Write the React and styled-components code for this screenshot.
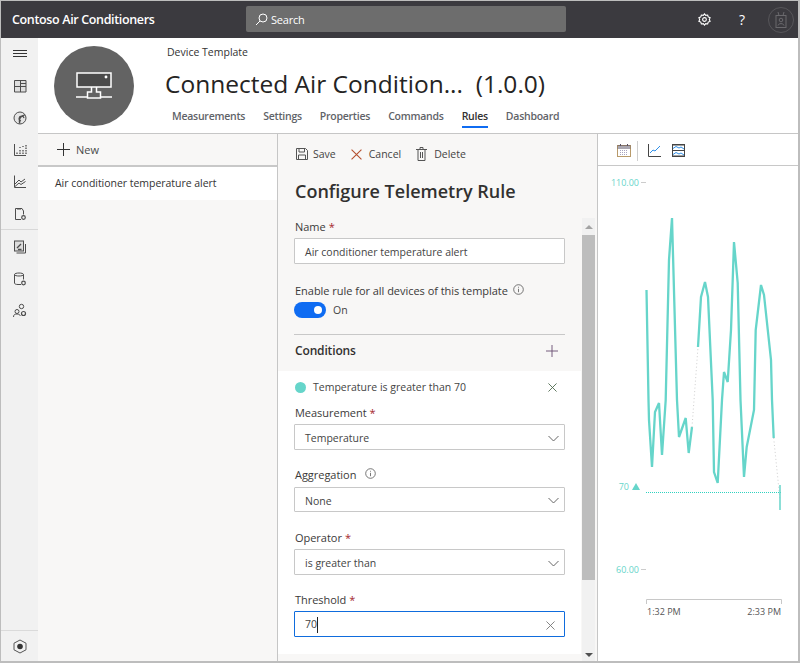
import React from "react";
import styled, { createGlobalStyle } from "styled-components";

const TEAL = "#66d5ca";
const FONT = `"Open Sans", "Noto Sans", Arial, sans-serif`;

const GlobalStyle = createGlobalStyle`
  * { box-sizing: border-box; }
  html, body { margin: 0; padding: 0; background: #fff; }
  body { font-family: ${FONT}; overflow: hidden; }
`;

const Frame = styled.div`
  width: 800px;
  height: 663px;
  display: flex;
  flex-direction: column;
  border: 1px solid #bdbdbd;
  border-right-width: 2px;
  border-bottom-width: 2px;
  overflow: hidden;
`;

const TopBar = styled.header`
  height: 37px;
  flex: none;
  display: flex;
  align-items: center;
  background: #3b3a3f;
  padding-left: 11px;
`;
const Brand = styled.div`
  width: 234px;
  color: #fff;
  font-size: 12.5px;
  font-weight: 600;
  letter-spacing: -0.35px;
`;
const SearchBox = styled.div`
  width: 320px;
  height: 26px;
  margin-top: -1px;
  background: #6d6d6d;
  border-radius: 2px;
  display: flex;
  align-items: center;
  gap: 3px;
  padding-left: 9px;
  color: #fff;
  font-size: 11px;
  letter-spacing: -0.2px;
`;
const TopIcons = styled.div`
  margin-left: auto;
  display: flex;
  align-items: center;
  padding-right: 4px;
`;
const TopIcon = styled.div`
  width: 38px;
  height: 30px;
  display: flex;
  align-items: center;
  justify-content: center;
  color: #fff;
  font-size: 14px;
`;
const Avatar = styled.div`
  width: 26px;
  height: 26px;
  margin-left: 7px;
  border: 1px solid #57565a;
  border-radius: 50%;
  display: flex;
  align-items: center;
  justify-content: center;
`;

const Body = styled.div`
  flex: 1;
  min-height: 0;
  display: flex;
`;

const Nav = styled.nav`
  width: 37px;
  flex: none;
  background: #f1f1f1;
  display: flex;
  flex-direction: column;
  align-items: center;
`;
const NavItem = styled.div`
  width: 100%;
  height: ${(p) => p.$h || 32}px;
  display: flex;
  align-items: center;
  justify-content: center;
  border-bottom: ${(p) => (p.$divided ? "1px solid #d8d8d8" : "none")};
`;
const NavFooter = styled.div`
  margin-top: auto;
  width: 100%;
  height: 31px;
  border-top: 1px solid #dadada;
  display: flex;
  align-items: center;
  justify-content: center;
`;

const Main = styled.main`
  flex: 1;
  min-width: 0;
  display: flex;
  flex-direction: column;
`;

const TemplateHeader = styled.section`
  height: 96px;
  flex: none;
  display: flex;
  background: #fff;
  border-bottom: 1px solid #c6c6c6;
`;
const Badge = styled.div`
  width: 80px;
  height: 80px;
  margin: 8px 0 0 16px;
  border-radius: 50%;
  background: #636363;
  display: flex;
  align-items: center;
  justify-content: center;
`;
const HeaderText = styled.div`
  margin-left: 31px;
  display: flex;
  flex-direction: column;
`;
const Crumb = styled.div`
  margin: 7px 0 0 2px;
  font-size: 10.5px;
  line-height: 15px;
  color: #333;
`;
const TemplateTitle = styled.h1`
  margin: 6px 0 0;
  font-size: 24.5px;
  line-height: 35px;
  font-weight: 400;
  color: #252423;
  white-space: pre;
`;
const Tabs = styled.div`
  display: flex;
  gap: 18px;
  margin: 4px 0 0 7px;
`;
const Tab = styled.div`
  height: 23px;
  padding-top: 3px;
  font-size: 10.5px;
  line-height: 16px;
  font-weight: 600;
  letter-spacing: -0.25px;
  color: ${(p) => (p.$active ? "#323130" : "#5f6368")};
  border-bottom: ${(p) => (p.$active ? "2px solid #0f6cf2" : "2px solid transparent")};
`;

const Panes = styled.div`
  flex: 1;
  min-height: 0;
  display: flex;
`;

const ListPane = styled.aside`
  width: 240px;
  flex: none;
  background: #f8f7f6;
  display: flex;
  flex-direction: column;
  border-right: 1px solid #c6c6c6;
`;
const ListBar = styled.div`
  height: 33px;
  flex: none;
  border-bottom: 2px solid #c8c8c8;
  display: flex;
  align-items: center;
  gap: 6px;
  padding: 0 0 1px 19px;
  font-size: 11px;
  color: #4a4a4a;
`;
const ListRow = styled.div`
  height: 33px;
  flex: none;
  background: #fff;
  display: flex;
  align-items: center;
  padding: 0 0 2px 17px;
  font-size: 10.5px;
  letter-spacing: -0.03px;
  color: #333;
`;

const FormPane = styled.section`
  width: 320px;
  flex: none;
  background: #f8f7f6;
  display: flex;
  flex-direction: column;
  border-right: 1px solid #c6c6c6;
`;
const ActionBar = styled.div`
  height: 38px;
  flex: none;
  display: flex;
  align-items: center;
  padding: 2px 0 0 18px;
`;
const Action = styled.div`
  display: flex;
  align-items: center;
  gap: ${(p) => p.$gap || 7}px;
  margin-right: 15px;
  font-size: 10.5px;
  color: #444;
`;
const FormTitle = styled.h2`
  margin: 6px 0 0 17px;
  font-size: 18px;
  line-height: 26px;
  font-weight: 600;
  color: #323130;
`;
const ScrollArea = styled.div`
  flex: 1;
  min-height: 0;
  display: flex;
  margin-top: 14px;
`;
const FormBody = styled.div`
  flex: 1;
  min-width: 0;
  display: flex;
  flex-direction: column;
`;
const Scrollbar = styled.div`
  width: 13px;
  flex: none;
  background: #f1f1f1;
  margin: 0 2px 0 1px;
  display: flex;
  flex-direction: column;
`;
const ScrollArrow = styled.div`
  height: ${(p) => (p.$down ? 12 : 17)}px;
  flex: none;
  display: flex;
  align-items: center;
  justify-content: center;
  &::before {
    content: "";
    border-left: 4px solid transparent;
    border-right: 4px solid transparent;
    ${(p) => (p.$down ? "border-top: 4px solid #505050;" : "border-bottom: 4px solid #a3a3a3;")}
  }
`;
const ScrollThumb = styled.div`
  height: 345px;
  flex: none;
  background: #bdbdbd;
`;
const ScrollRest = styled.div`
  flex: 1;
`;
const TopFields = styled.div`
  padding: 1px 16px 0 16px;
  height: 153px;
  flex: none;
  display: flex;
  flex-direction: column;
`;
const Label = styled.label`
  display: flex;
  align-items: center;
  gap: ${(p) => p.$gap || 0}px;
  padding-left: 1px;
  font-size: 11px;
  line-height: 16px;
  color: #3b3a39;
  letter-spacing: -0.03px;
`;
const Star = styled.span`
  color: #a4262c;
  margin-left: 3px;
`;
const InputBox = styled.div`
  height: ${(p) => p.$h || 26}px;
  margin-top: ${(p) => p.$mt || 3}px;
  background: #fff;
  border: 1px solid ${(p) => (p.$focus ? "#0f6cdd" : "#c8c8c8")};
  border-radius: 1px;
  display: flex;
  align-items: center;
  justify-content: space-between;
  padding: 2px 9px 0 10px;
  font-size: 10.5px;
  color: #444;
`;
const Caret = styled.span`
  display: inline-block;
  width: 1px;
  height: 16px;
  background: #222;
  vertical-align: middle;
`;
const EnableLabel = styled(Label)`
  margin-top: 19px;
`;
const ToggleRow = styled.div`
  display: flex;
  align-items: center;
  gap: 7px;
  margin-top: 3px;
  font-size: 10.5px;
  color: #444;
`;
const ToggleTrack = styled.div`
  width: 32px;
  height: 16px;
  border-radius: 8px;
  background: #0f6cf2;
  display: flex;
  align-items: center;
  justify-content: flex-end;
  padding-right: 4px;
`;
const ToggleKnob = styled.div`
  width: 8px;
  height: 8px;
  border-radius: 50%;
  background: #fff;
`;
const ConditionsHead = styled.div`
  height: 35px;
  margin-top: 16px;
  border-top: 1px solid #c8c8c8;
  display: flex;
  align-items: center;
  justify-content: space-between;
  padding: 0 7px 3px 1px;
  font-size: 12px;
  font-weight: 600;
  letter-spacing: -0.15px;
  color: #323130;
`;
const ConditionCard = styled.div`
  flex: 1;
  background: #fff;
  margin-bottom: 7px;
  padding: 0 16px;
`;
const ConditionRow = styled.div`
  height: 34px;
  display: flex;
  align-items: center;
  gap: 7px;
  padding: 0 8px 2px 1px;
  font-size: 10.5px;
  color: #444;
`;
const ConditionDot = styled.span`
  width: 11px;
  height: 11px;
  border-radius: 50%;
  background: ${TEAL};
`;
const ConditionText = styled.span`
  flex: 1;
`;
const Field = styled.div`
  height: ${(p) => p.$h || 62}px;
`;
const ChevronSvg = styled.svg`
  margin-right: -4px;
`;

const ChartPane = styled.section`
  flex: 1;
  min-width: 0;
  background: #fff;
  display: flex;
  flex-direction: column;
`;
const ChartBar = styled.div`
  height: 32px;
  flex: none;
  border-bottom: 1px solid #c8c8c8;
  display: flex;
  align-items: center;
  padding: 2px 0 0 19px;
`;
const ChartDivider = styled.div`
  width: 1px;
  height: 20px;
  background: #cfcfcf;
  margin: 0 10px 0 6px;
`;
const ChartIcons = styled.div`
  display: flex;
  gap: 11px;
`;
const ChartSvg = styled.svg`
  display: block;
  flex: 1;
  min-height: 0;
  text {
    font-family: ${FONT};
    font-size: 9px;
  }
`;

const Chevron = () => (
  <ChevronSvg width="11" height="7" viewBox="0 0 11 7" fill="none" stroke="#666" strokeWidth="1">
    <path d="M.5 1 5.500 6 10.500 1" />
  </ChevronSvg>
);
const CloseX = ({ color = "#555", size = 9 }) => (
  <svg width={size} height={size} viewBox="0 0 10 10" fill="none" stroke={color} strokeWidth="1">
    <path d="M.5.5 9.500 9.500M9.500.5.5 9.500" />
  </svg>
);
const Plus = ({ color = "#333", size = 13 }) => (
  <svg width={size} height={size} viewBox="0 0 13 13" fill="none" stroke={color} strokeWidth="1">
    <path d="M6.500 0V13M0 6.500H13" />
  </svg>
);
const InfoIcon = () => (
  <svg width="11" height="11" viewBox="0 0 11 11" fill="none" stroke="#555" strokeWidth=".8" style={{ marginTop: -3 }}>
    <circle cx="5.500" cy="5.500" r="4.800" />
    <path d="M5.500 4.800V8.200M5.500 2.800V3.700" />
  </svg>
);

const NavIcon = ({ children }) => (
  <svg width="16" height="16" viewBox="0 0 16 16" fill="none" stroke="#4d4d4d" strokeWidth="1">
    {children}
  </svg>
);

// points are read off the page, the chart svg starts at x 598, y 166
const toChart = (pts) => pts.map(([x, y]) => `${x - 598},${y - 166}`).join(" ");

const LINE_A = [
  [646.5, 290], [648.5, 400], [649, 420], [652, 467], [655, 412], [659, 403], [662, 455],
  [665.7, 400], [669, 260], [672, 218], [677, 400], [679, 437], [685.7, 418], [688.7, 453], [692, 427],
];
const LINE_B = [
  [698, 347], [701, 297], [705, 282], [708, 297], [712.7, 400], [714, 472], [717.7, 483],
  [722, 400], [724, 372], [727.7, 382], [731, 330], [734, 242], [737.7, 283], [740.5, 400],
  [744, 477], [746.7, 447], [754, 410], [755.7, 330], [761, 285], [764, 295], [771, 360],
  [772, 400], [773.7, 438],
];

const Chart = () => (
  <ChartSvg viewBox="0 0 198 495" width="198" height="495">
    <text x="41" y="20" textAnchor="end" fill={TEAL}>110.00</text>
    <path d="M43 16.500H48" stroke="#ccc" />
    <text x="41" y="407" textAnchor="end" fill={TEAL}>60.00</text>
    <path d="M43 403.500H48" stroke="#ccc" />
    <text x="31" y="324" textAnchor="end" fill={TEAL}>70</text>
    <polygon points="34,324 38,317 42,324" fill={TEAL} />
    <polyline points={toChart(LINE_A)} fill="none" stroke={TEAL} strokeWidth="2.300" />
    <polyline points={toChart(LINE_B)} fill="none" stroke={TEAL} strokeWidth="2.300" />
    <path d="M94 261 100 181" stroke="#cfcfcf" strokeDasharray="1 2.500" fill="none" />
    <path d="M175.700 272 182 334" stroke="#cfcfcf" strokeDasharray="1 2.500" fill="none" />
    <path d="M48 326.500H183" stroke="#2fd3c0" strokeDasharray="1 1" fill="none" />
    <path d="M182 319V344" stroke={TEAL} strokeWidth="1.500" fill="none" />
    <path d="M48.500 438V433.500H183.500V438" stroke="#c8c8c8" fill="none" />
    <text x="49" y="449" fill="#555">1:32 PM</text>
    <text x="183" y="449" textAnchor="end" fill="#555">2:33 PM</text>
  </ChartSvg>
);

export default function App() {
  return (
    <Frame>
      <GlobalStyle />
      <TopBar>
        <Brand>Contoso Air Conditioners</Brand>
        <SearchBox>
          <svg width="13" height="13" viewBox="0 0 13 13" fill="none" stroke="#fff" strokeWidth="1">
            <circle cx="8" cy="5" r="4" />
            <path d="M5 8 1 12" />
          </svg>
          Search
        </SearchBox>
        <TopIcons>
          <TopIcon>
            <svg width="13" height="13" viewBox="0 0 14 14" fill="none" stroke="#fff" strokeWidth="1.200">
              <circle cx="7" cy="7" r="2" />
              <path d="M7 1 8.300 2.600 10.400 2.200 11 4.200 13 5 12.200 7 13 9 11 9.800 10.400 11.800 8.300 11.400 7 13 5.700 11.400 3.600 11.800 3 9.800 1 9 1.800 7 1 5 3 4.200 3.600 2.200 5.700 2.600Z" />
            </svg>
          </TopIcon>
          <TopIcon>?</TopIcon>
          <Avatar>
            <svg width="14" height="18" viewBox="0 0 14 18" fill="none" stroke="#6a696d" strokeWidth="1">
              <rect x="2" y="4.500" width="10" height="12" />
              <circle cx="7" cy="9" r="1.800" />
              <path d="M4 14.500C4.500 12 9.500 12 10 14.500M5 4.500 4 1M9 4.500 10 1" />
            </svg>
          </Avatar>
        </TopIcons>
      </TopBar>
      <Body>
        <Nav>
          <NavItem>
            <svg width="14" height="8" viewBox="0 0 14 8" stroke="#333" strokeWidth="1">
              <path d="M0 .5H14M0 3.500H14M0 6.500H14" />
            </svg>
          </NavItem>
          <NavItem>
            <NavIcon>
              <path d="M2.500 2.500H14V14H2.500Z" fill="#dedede" />
              <path d="M2.500 8.500H14M8.500 2.500V14M8.500 5.500H14" />
            </NavIcon>
          </NavItem>
          <NavItem>
            <NavIcon>
              <circle cx="8" cy="8" r="6" fill="#e4e4e4" />
              <path d="M8 13.500C6 10 9 5 13 5M9 11a2.500 2.500 0 1 1 3-3" strokeWidth="1.200" />
            </NavIcon>
          </NavItem>
          <NavItem>
            <NavIcon>
              <path d="M2.500 2V13.500H14" />
              <path d="M5 12V10M8 12V8M8 6V5M11 12V7M11 5V4M14 12V3" strokeWidth="1.300" strokeDasharray="1.500 1" />
            </NavIcon>
          </NavItem>
          <NavItem>
            <NavIcon>
              <path d="M2.500 1.500V13.500H14" />
              <path d="M3 10 7 6 9 8 13 5M3 12.500 7 9 9 10.500 13.500 7.500" />
            </NavIcon>
          </NavItem>
          <NavItem $divided>
            <NavIcon>
              <path d="M9 13.500H3.500V2.500H10L11.500 5V8.500M6 2.500V4M8 2.500V4" />
              <circle cx="11.500" cy="11.500" r="1.800" strokeWidth="1.200" />
            </NavIcon>
          </NavItem>
          <NavItem $h={33}>
            <NavIcon>
              <rect x="2.500" y="2" width="9" height="10" fill="#dcdcdc" />
              <path d="M13.500 5V14H4.500" />
              <path d="M5 9 9 5M6 10.500h3.500" strokeWidth="1.300" />
            </NavIcon>
          </NavItem>
          <NavItem>
            <NavIcon>
              <path d="M9 13.500H6C4 13.500 2.500 13 2.500 12V3.500C2.500 1.500 11.500 1.500 11.500 3.500V8.500M2.500 3.500C2.500 5.500 11.500 5.500 11.500 3.500" />
              <circle cx="11.500" cy="12" r="1.800" strokeWidth="1.200" />
            </NavIcon>
          </NavItem>
          <NavItem>
            <NavIcon>
              <circle cx="9.500" cy="3.500" r="2.200" />
              <circle cx="5" cy="8.500" r="2" />
              <circle cx="11.500" cy="10.500" r="2" strokeWidth="1.200" />
              <path d="M1.500 14C1.500 11.500 3 11 5 11S8 12 8.500 13" />
            </NavIcon>
          </NavItem>
          <NavFooter>
            <svg width="14" height="15" viewBox="0 0 14 15" fill="#333" stroke="#555" strokeWidth="1">
              <path d="M7 1 13 4.200V10.800L7 14 1 10.800V4.200Z" fill="none" />
              <circle cx="7" cy="7.500" r="2.800" stroke="none" />
            </svg>
          </NavFooter>
        </Nav>
        <Main>
          <TemplateHeader>
            <Badge>
              <svg width="36" height="28" viewBox="0 0 36 28" fill="none" stroke="#fff" strokeWidth="1.500">
                <rect x="1" y="1" width="34" height="14" fill="#4b4b4b" />
                <circle cx="30" cy="5" r=".7" fill="#fff" />
                <path d="M15.500 15V20H11.500V26H24.500V20H20.500V15M0 25H11.500M24.500 25H36" />
              </svg>
            </Badge>
            <HeaderText>
              <Crumb>Device Template</Crumb>
              <TemplateTitle>Connected Air Condition...  (1.0.0)</TemplateTitle>
              <Tabs>
                <Tab>Measurements</Tab>
                <Tab>Settings</Tab>
                <Tab>Properties</Tab>
                <Tab>Commands</Tab>
                <Tab $active>Rules</Tab>
                <Tab>Dashboard</Tab>
              </Tabs>
            </HeaderText>
          </TemplateHeader>
          <Panes>
            <ListPane>
              <ListBar>
                <Plus />
                New
              </ListBar>
              <ListRow>Air conditioner temperature alert</ListRow>
            </ListPane>
            <FormPane>
              <ActionBar>
                <Action $gap={5}>
                  <svg width="12" height="12" viewBox="0 0 12 12" fill="none" stroke="#555" strokeWidth="1">
                    <path d="M.5.5H9.500L11.500 2.500V11.500H.5ZM3 .5V4H8.500V.5M2.500 11.500V7H9.500V11.500" />
                  </svg>
                  Save
                </Action>
                <Action>
                  <CloseX color="#b5502f" size={11} />
                  Cancel
                </Action>
                <Action>
                  <svg width="11" height="14" viewBox="0 0 11 14" fill="none" stroke="#555" strokeWidth="1">
                    <path d="M0 2.500H11M2 2.500V13.500H9V2.500M4 2.500V.5H7V2.500M4.500 5V11M6.500 5V11" />
                  </svg>
                  Delete
                </Action>
              </ActionBar>
              <FormTitle>Configure Telemetry Rule</FormTitle>
              <ScrollArea>
                <FormBody>
                  <TopFields>
                    <Label>Name<Star>*</Star></Label>
                    <InputBox>Air conditioner temperature alert</InputBox>
                    <EnableLabel $gap={5}>Enable rule for all devices of this template <InfoIcon /></EnableLabel>
                    <ToggleRow>
                      <ToggleTrack><ToggleKnob /></ToggleTrack>
                      On
                    </ToggleRow>
                    <ConditionsHead>
                      Conditions
                      <Plus color="#6b4f73" size={12} />
                    </ConditionsHead>
                  </TopFields>
                  <ConditionCard>
                    <ConditionRow>
                      <ConditionDot />
                      <ConditionText>Temperature is greater than 70</ConditionText>
                      <CloseX color="#4f6b4f" />
                    </ConditionRow>
                    <Field>
                      <Label>Measurement<Star>*</Star></Label>
                      <InputBox>Temperature <Chevron /></InputBox>
                    </Field>
                    <Field $h={63}>
                      <Label $gap={9}>Aggregation <InfoIcon /></Label>
                      <InputBox $h={25} $mt={4}>None <Chevron /></InputBox>
                    </Field>
                    <Field>
                      <Label>Operator<Star>*</Star></Label>
                      <InputBox>is greater than <Chevron /></InputBox>
                    </Field>
                    <Field>
                      <Label>Threshold<Star>*</Star></Label>
                      <InputBox $focus>
                        <span>70<Caret /></span>
                        <CloseX color="#777" size={9} />
                      </InputBox>
                    </Field>
                  </ConditionCard>
                </FormBody>
                <Scrollbar>
                  <ScrollArrow />
                  <ScrollThumb />
                  <ScrollRest />
                  <ScrollArrow $down />
                </Scrollbar>
              </ScrollArea>
            </FormPane>
            <ChartPane>
              <ChartBar>
                <svg width="14" height="15" viewBox="0 0 14 15" fill="none" strokeWidth="1">
                  <rect x=".5" y="2.500" width="13" height="11" stroke="#b89a6a" />
                  <path d="M.5 3H13.500M.5 5H13.500M3.500 1V3M10.500 1V3" stroke="#554f63" />
                  <path d="M3 7.500H11M3 9.500H11M3 11.500H11" stroke="#a8a4c0" strokeDasharray="1 1" />
                </svg>
                <ChartDivider />
                <ChartIcons>
                  <svg width="13" height="13" viewBox="0 0 13 13" fill="none" strokeWidth="1">
                    <path d="M.5 0V12.500H13" stroke="#444" />
                    <path d="M2 9 5 6 7 7 12 2" stroke="#2f8fe8" />
                  </svg>
                  <svg width="13" height="13" viewBox="0 0 13 13" fill="none" strokeWidth="1">
                    <path d="M1 4.500 4 2.500 7 4 9 3 12 5M1 10.500 4 8.500 7 10 9 9 12 11" stroke="#2f8fe8" />
                    <rect x=".5" y=".5" width="12" height="12" stroke="#444" />
                    <path d="M.5 6.500H12.500M.5 1H12.500M.5 12H12.500" stroke="#444" />
                  </svg>
                </ChartIcons>
              </ChartBar>
              <Chart />
            </ChartPane>
          </Panes>
        </Main>
      </Body>
    </Frame>
  );
}
